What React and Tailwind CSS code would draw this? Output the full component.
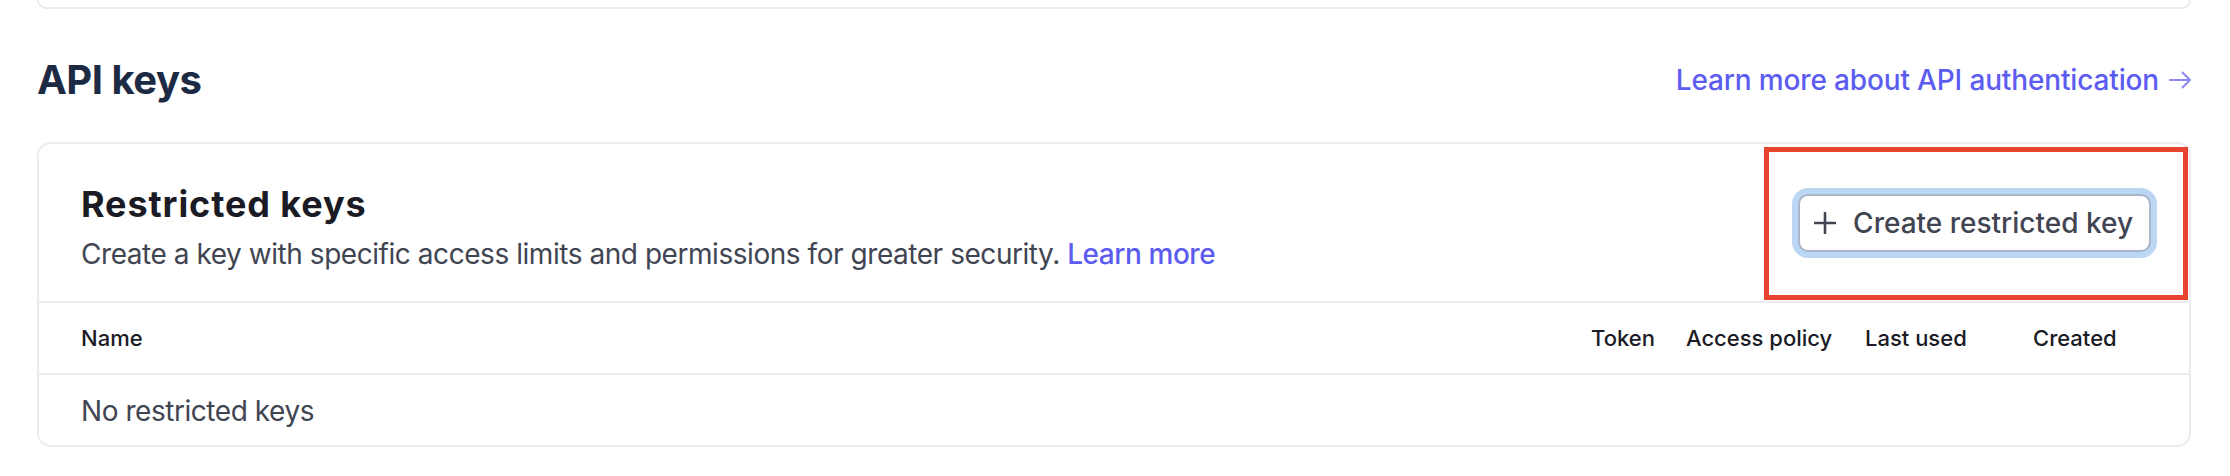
import React from "react";

function ArrowRight() {
  return (
    <svg width="22" height="18" viewBox="0 0 22 18" fill="none" stroke="#8c88f7" strokeWidth="2" strokeLinecap="round" strokeLinejoin="round">
      <path d="M1 9h20M13.5 1.5 21 9l-7.5 7.5" />
    </svg>
  );
}

function PlusIcon() {
  return (
    <svg width="22" height="22" viewBox="0 0 22 22" fill="none" stroke="#414552" strokeWidth="2.6" strokeLinecap="round">
      <path d="M11 1v20M1 11h20" />
    </svg>
  );
}

export default function App() {
  return (
    <div
      className="relative min-h-[476px] bg-white pl-[37px] pr-[39px]"
      style={{ fontFamily: "Inter, 'Noto Sans', sans-serif" }}
    >
      {/* Previous card, only its bottom edge is visible */}
      <div className="h-[9px] rounded-b-[14px] border-2 border-t-0 border-[#ebebf0]" />

      {/* Section header */}
      <div className="mt-[47px] mb-[38px] flex h-[48px] items-center justify-between">
        <h2 className="text-[40px] leading-[48px] font-bold tracking-[-0.5px] text-[#1c2a44]">API keys</h2>
        <a href="#" className="flex items-center gap-[10px] text-[28px] leading-[36px] font-medium tracking-[-0.15px] text-[#5c5cf0]">
          Learn more about API authentication
          <ArrowRight />
        </a>
      </div>

      {/* Restricted keys card */}
      <div className="rounded-[14px] border-2 border-[#ebebf0]">
        <div className="flex h-[157px] items-center justify-between pl-[42px] pr-[38px]">
          <div className="pt-[9px]">
            <h3 className="text-[36px] leading-[44px] font-bold tracking-[0.9px] text-[#1a1b25]">Restricted keys</h3>
            <p className="mt-[10px] text-[28px] leading-[36px] tracking-[-0.45px] text-[#414552]">
              Create a key with specific access limits and permissions for greater security.{" "}
              <a href="#" className="font-medium text-[#5c5cf0]">Learn more</a>
            </p>
          </div>
          <button className="flex h-[58px] items-center gap-[17px] rounded-[10px] border-2 border-[#a9b5c8] bg-white pl-[14px] pr-[16px] text-[28px] font-medium text-[#414552] shadow-[0_0_0_6px_#bcd7f4]">
            <PlusIcon />
            Create restricted key
          </button>
        </div>

        <div className="flex h-[72px] items-center border-t-2 border-[#ebebf0] pl-[42px] text-[22px] font-medium text-[#1a1b25]">
          <div className="flex-1">Name</div>
          <div className="w-[95px]">Token</div>
          <div className="w-[179px]">Access policy</div>
          <div className="w-[168px]">Last used</div>
          <div className="w-[156px]">Created</div>
        </div>

        <div className="flex h-[72px] items-center border-t-2 border-[#ebebf0] pl-[42px] pt-[2px] text-[28px] tracking-[-0.45px] text-[#414552]">
          No restricted keys
        </div>
      </div>

      {/* Annotation box */}
      <div className="pointer-events-none absolute left-[1764px] top-[147px] h-[153px] w-[424px] border-[5px] border-[#e8432e]" />
    </div>
  );
}
